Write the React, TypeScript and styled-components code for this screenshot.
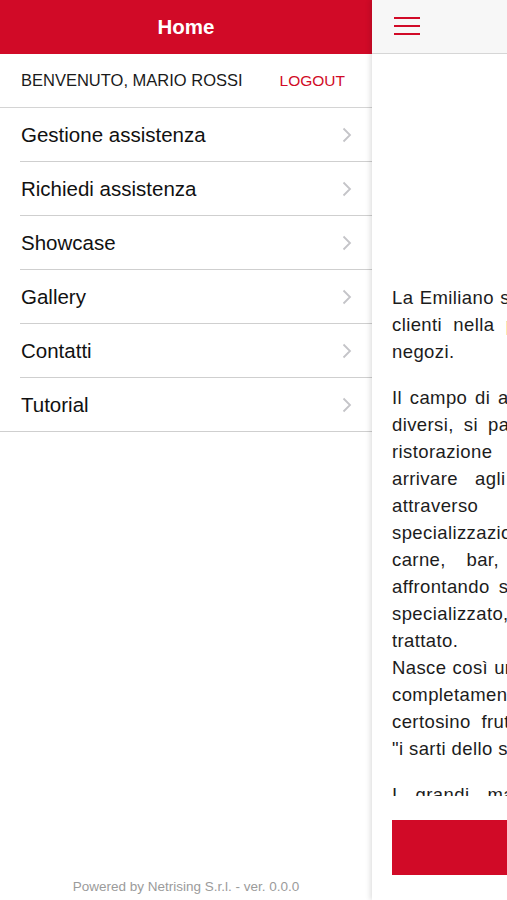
import styled, { createGlobalStyle } from 'styled-components';

const GlobalStyle = createGlobalStyle`
  html, body {
    margin: 0;
    padding: 0;
    background: #fff;
  }
  body {
    font-family: 'Liberation Sans', Arial, Helvetica, sans-serif;
    -webkit-font-smoothing: antialiased;
  }
`;

const RED = '#d10a27';

const Screen = styled.div`
  display: flex;
  width: 507px;
  height: 900px;
  overflow: hidden;
  background: #fff;
`;

const Drawer = styled.aside`
  flex: 0 0 372px;
  display: flex;
  flex-direction: column;
  background: #fff;
`;

const DrawerHeader = styled.header`
  height: 54px;
  background: ${RED};
  color: #fff;
  display: flex;
  align-items: center;
  justify-content: center;
  font-size: 20.5px;
  font-weight: bold;
`;

const WelcomeRow = styled.div`
  height: 53px;
  display: flex;
  align-items: center;
  justify-content: space-between;
  padding: 0 27px 0 21px;
  border-bottom: 1px solid #d4d4d4;
`;

const Welcome = styled.span`
  font-size: 16.5px;
  color: #1a1a1a;
  text-transform: uppercase;
`;

const Logout = styled.a`
  font-size: 15.5px;
  color: ${RED};
  text-transform: uppercase;
  text-decoration: none;
  cursor: pointer;
`;

const Menu = styled.nav`
  display: flex;
  flex-direction: column;
  border-bottom: 1px solid #cfcfcf;
`;

const MenuItem = styled.a<{ $last?: boolean }>`
  height: 53px;
  display: flex;
  align-items: center;
  justify-content: space-between;
  margin-left: 20px;
  padding: 0 20px 0 1px;
  font-size: 20.5px;
  color: #111;
  text-decoration: none;
  border-bottom: ${(p) => (p.$last ? 'none' : '1px solid #cfcfcf')};
  cursor: pointer;
`;

const Footer = styled.footer`
  margin-top: auto;
  padding-bottom: 4px;
  text-align: center;
  font-size: 13.5px;
  line-height: 18px;
  color: #9b9b9b;
`;

const Main = styled.main`
  flex: 0 0 507px;
  display: flex;
  flex-direction: column;
  background: #fff;
  box-shadow: -2px 0 5px rgba(0, 0, 0, 0.12);
`;

const TopBar = styled.div`
  height: 54px;
  flex-shrink: 0;
  display: flex;
  align-items: center;
  padding-left: 22px;
  background: #f7f7f7;
  border-bottom: 1px solid #d6d6d6;
  box-sizing: border-box;
`;

const Burger = styled.button`
  display: flex;
  flex-direction: column;
  gap: 6px;
  padding: 0;
  margin-top: -2px;
  border: none;
  background: none;
  cursor: pointer;
`;

const BurgerBar = styled.span`
  display: block;
  width: 26px;
  height: 2px;
  background: ${RED};
`;

const Scroll = styled.div`
  flex: 1;
  overflow: hidden;
  padding: 0 20px;
`;

const Banner = styled.div`
  height: 230px;
`;

const Paragraph = styled.div`
  margin-bottom: 19px;
  font-size: 18.5px;
  letter-spacing: 0.4px;
  line-height: 27px;
  color: #1c1c1c;
`;

const Line = styled.div<{ $last?: boolean }>`
  height: 27px;
  overflow: hidden;
  text-align: justify;
  text-align-last: ${(p) => (p.$last ? 'left' : 'justify')};
`;

const BottomBar = styled.div`
  height: 104px;
  flex-shrink: 0;
  padding: 24px 20px 0;
  box-sizing: border-box;
  background: #fff;
`;

const RedButton = styled.button`
  width: 100%;
  height: 55px;
  border: none;
  background: ${RED};
  color: #fff;
  font-size: 18px;
`;

const Chevron = () => (
  <svg width="10" height="16" viewBox="0 0 10 16">
    <polyline points="1.5,1.5 8,8 1.5,14.5" fill="none" stroke="#c4c4c8" strokeWidth="1.8" />
  </svg>
);

const menu = ['Gestione assistenza', 'Richiedi assistenza', 'Showcase', 'Gallery', 'Contatti', 'Tutorial'];

// '*' marks the last line before a break (not justified)
const paragraphs: string[][] = [
  [
    'La Emiliano si occupa da molti anni di seguire i propri',
    'clienti nella progettazione e nella realizzazione dei',
    'negozi.',
  ],
  [
    'Il campo di azione è molto ampio e abbraccia settori',
    'diversi, si parte dalla progettazione di arredi per la',
    'ristorazione e del commercio, fino ad',
    'arrivare agli allestimenti più complessi e curati',
    'attraverso le numerose',
    'specializzazioni: panetterie, pasticcerie, pesce,',
    'carne, bar, gelaterie, ristoranti e gastronomie,',
    'affrontando sempre con competenza e con un team',
    'specializzato, ogni singolo settore',
    'trattato.*',
    'Nasce così un arredamento davvero personalizzato, e',
    'completamente su misura, risultato di un lavoro',
    "certosino frutto della passione e dell'esperienza de",
    '"i sarti dello spazio".*',
  ],
  [
    'I grandi marchi della distribuzione ci scelgono',
    'per la nostra esperienza e professionalità.*',
  ],
];

export default function App() {
  return (
    <>
      <GlobalStyle />
      <Screen>
        <Drawer>
          <DrawerHeader>Home</DrawerHeader>
          <WelcomeRow>
            <Welcome>Benvenuto, Mario Rossi</Welcome>
            <Logout>Logout</Logout>
          </WelcomeRow>
          <Menu>
            {menu.map((item, i) => (
              <MenuItem key={item} $last={i === menu.length - 1}>
                {item}
                <Chevron />
              </MenuItem>
            ))}
          </Menu>
          <Footer>Powered by Netrising S.r.l. - ver. 0.0.0</Footer>
        </Drawer>
        <Main>
          <TopBar>
            <Burger aria-label="menu">
              <BurgerBar />
              <BurgerBar />
              <BurgerBar />
            </Burger>
          </TopBar>
          <Scroll>
            <Banner />
            {paragraphs.map((lines, i) => (
              <Paragraph key={i}>
                {lines.map((l, j) => {
                  const last = l.endsWith('*') || j === lines.length - 1;
                  return (
                    <Line key={j} $last={last}>
                      {l.replace(/\*$/, '')}
                    </Line>
                  );
                })}
              </Paragraph>
            ))}
          </Scroll>
          <BottomBar>
            <RedButton />
          </BottomBar>
        </Main>
      </Screen>
    </>
  );
}
